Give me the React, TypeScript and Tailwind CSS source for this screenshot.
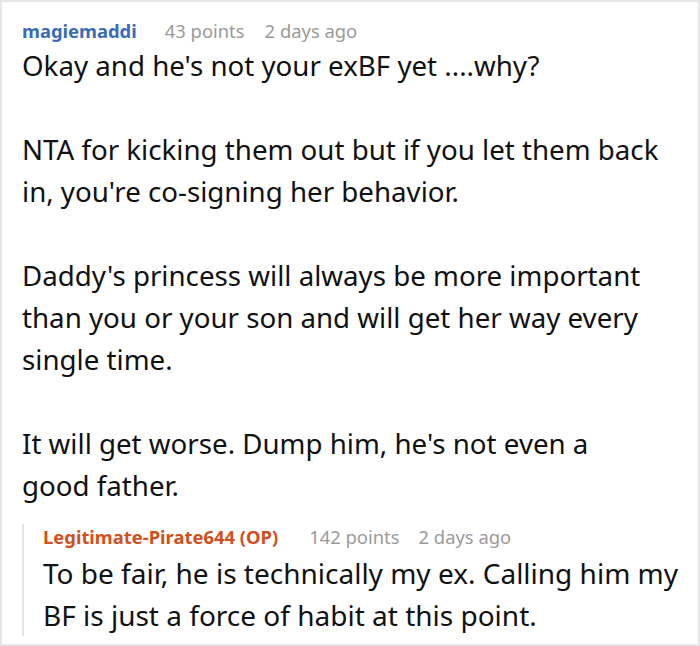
import React from "react";

export default function App() {
  return (
    <div className="w-[700px] h-[646px] bg-white border-2 border-[#e6e6e6] overflow-hidden" style={{ fontFamily: '"Noto Sans", "Open Sans", sans-serif' }}>
      <div className="pl-[20px] pr-[10px] pt-[16px]">
        <div className="flex items-baseline text-[18.4px] leading-[26px]">
          <span className="font-bold text-[#3a6cb8]">magiemaddi</span>
          <span className="ml-[28px] text-[#9a9a9a]">43 points</span>
          <span className="ml-[20px] text-[#9a9a9a]">2 days ago</span>
        </div>
        <div className="mr-[25px] text-[27.7px] leading-[42px] text-[#111]">
          Okay and he's not your exBF yet ....why?
          <br />
          <br />
          NTA for kicking them out but if you let them back in, you're co-signing her behavior.
          <br />
          <br />
          Daddy's princess will always be more important than you or your son and will get her way every single time.
          <br />
          <br />
          It will get worse. Dump him, he's not even a good father.
        </div>
        <div className="mt-[18px] border-l-2 border-[#e6e6e6] pl-[19px]">
          <div className="flex items-baseline text-[18.4px] leading-[26px]">
            <span className="font-bold text-[#d2501d]">Legitimate-Pirate644 (OP)</span>
            <span className="ml-[31px] text-[#9a9a9a]">142 points</span>
            <span className="ml-[19px] text-[#9a9a9a]">2 days ago</span>
          </div>
          <div className="mt-[2px] text-[28px] leading-[42px] text-[#111]">
            To be fair, he is technically my ex. Calling him my BF is just a force of habit at this point.
          </div>
        </div>
      </div>
    </div>
  );
}
